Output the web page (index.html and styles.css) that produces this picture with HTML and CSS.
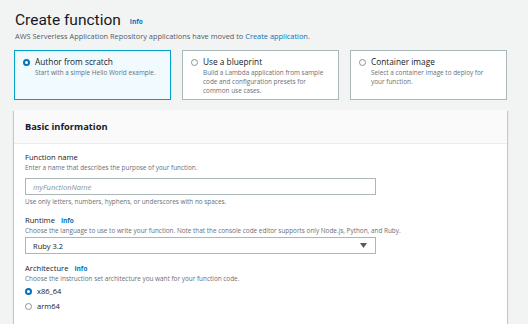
FILE: index.html
```html
<!DOCTYPE html>
<html lang="en">
<head>
  <meta charset="UTF-8" />
  <title>Create function</title>
  <link rel="stylesheet" href="styles.css">
</head>
<body>

  <div class="page">
    <div class="head">
      <h1>Create function</h1>
      <a class="info" href="#">Info</a>
    </div>
    <p class="notice">AWS Serverless Application Repository applications have moved to <a href="#">Create application</a>.</p>

    <div class="options">
      <label class="option selected">
        <span class="radio on"></span>
        <span class="option-text">
          <span class="option-title">Author from scratch</span>
          <span class="option-desc">Start with a simple Hello World example.</span>
        </span>
      </label>
      <label class="option">
        <span class="radio"></span>
        <span class="option-text">
          <span class="option-title">Use a blueprint</span>
          <span class="option-desc">Build a Lambda application from sample code and configuration presets for common use cases.</span>
        </span>
      </label>
      <label class="option">
        <span class="radio"></span>
        <span class="option-text">
          <span class="option-title">Container image</span>
          <span class="option-desc">Select a container image to deploy for your function.</span>
        </span>
      </label>
    </div>

    <div class="panel">
      <div class="panel-head">Basic information</div>
      <div class="panel-body">

        <div class="field">
          <div class="field-label">Function name</div>
          <div class="field-desc">Enter a name that describes the purpose of your function.</div>
          <div class="input placeholder">myFunctionName</div>
          <div class="field-hint">Use only letters, numbers, hyphens, or underscores with no spaces.</div>
        </div>

        <div class="field">
          <div class="field-label">Runtime <a class="info" href="#">Info</a></div>
          <div class="field-desc">Choose the language to use to write your function. Note that the console code editor supports only Node.js, Python, and Ruby.</div>
          <div class="input select">
            <span>Ruby 3.2</span>
            <svg width="7" height="5" viewBox="0 0 7 5"><path d="M0 0h7L3.5 5z" fill="#545b64"/></svg>
          </div>
        </div>

        <div class="field">
          <div class="field-label">Architecture <a class="info" href="#">Info</a></div>
          <div class="field-desc">Choose the instruction set architecture you want for your function code.</div>
          <div class="radio-row"><span class="radio on"></span>x86_64</div>
          <div class="radio-row"><span class="radio"></span>arm64</div>
        </div>

      </div>
    </div>
  </div>

</body>
</html>
```

FILE: styles.css
```css
body {
  margin: 0;
  background: #f2f3f3;
  font-family: 'Open Sans', 'Noto Sans', sans-serif;
  color: #16191f;
  height: 324px;
  overflow: hidden;
}

a {
  color: #0073bb;
  text-decoration: none;
}

.page {
  padding: 9px 21px 0 14px;
}

.head {
  display: flex;
  align-items: center;
  gap: 9px;
  padding-left: 1px;
}

.head h1 {
  margin: 0;
  font-family: Roboto, 'Open Sans', sans-serif;
  font-size: 15.5px;
  font-weight: 400;
  line-height: 22px;
}

.info {
  font-size: 6.5px;
  font-weight: 700;
  margin-left: 4px;
}

.head .info {
  margin-left: 0;
  padding-top: 2px;
}

.notice {
  margin: 0 0 0 1px;
  font-size: 7.4px;
  color: #545b64;
}

.options {
  display: flex;
  gap: 11px;
  margin-top: 9px;
}

.option {
  flex: 1;
  height: 50px;
  box-sizing: border-box;
  background: #fff;
  border: 1px solid #aab7b8;
  padding: 5px 8px;
  display: flex;
  gap: 5px;
}

.option.selected {
  background: #f1faff;
  border-color: #00a1c9;
}

.radio {
  width: 7px;
  height: 7px;
  border: 1px solid #879596;
  border-radius: 50%;
  box-sizing: border-box;
  background: #fff;
  flex-shrink: 0;
  margin-top: 3px;
}

.radio.on {
  border: 2.5px solid #0073bb;
}

.option-text {
  display: flex;
  flex-direction: column;
}

.option-title {
  font-size: 8.3px;
  line-height: 12px;
}

.option-desc {
  font-size: 6.4px;
  line-height: 9px;
  color: #687078;
}

.panel {
  margin-top: 10px;
  background: #fff;
  box-shadow: 0 1px 1px rgba(0,28,36,0.3), 1px 1px 1px rgba(0,28,36,0.15), -1px 1px 1px rgba(0,28,36,0.15);
  height: 300px;
}

.panel-head {
  background: #fafafa;
  border-bottom: 1px solid #eaeded;
  height: 34px;
  box-sizing: border-box;
  padding: 0 11px;
  display: flex;
  align-items: center;
  font-size: 9.3px;
  font-weight: 700;
}

.panel-body {
  padding: 8px 11px;
}

.field {
  margin-bottom: 9px;
}

.field-label {
  font-size: 7.6px;
  line-height: 11px;
}

.field-desc,
.field-hint {
  font-size: 6.4px;
  line-height: 9px;
  color: #687078;
}

.field-hint {
  margin-top: 2px;
}

.input {
  width: 351px;
  height: 17px;
  box-sizing: border-box;
  border: 1px solid #aab7b8;
  margin-top: 6px;
  padding: 0 7px;
  display: flex;
  align-items: center;
  font-size: 7.5px;
}

.placeholder {
  color: #879596;
  font-style: italic;
}

.select {
  justify-content: space-between;
  margin-top: 2px;
  padding-right: 8px;
}

.radio-row {
  display: flex;
  align-items: center;
  gap: 5px;
  font-size: 7.5px;
  height: 14px;
  margin-top: 1px;
}

.radio-row .radio {
  margin-top: 0;
}
```
